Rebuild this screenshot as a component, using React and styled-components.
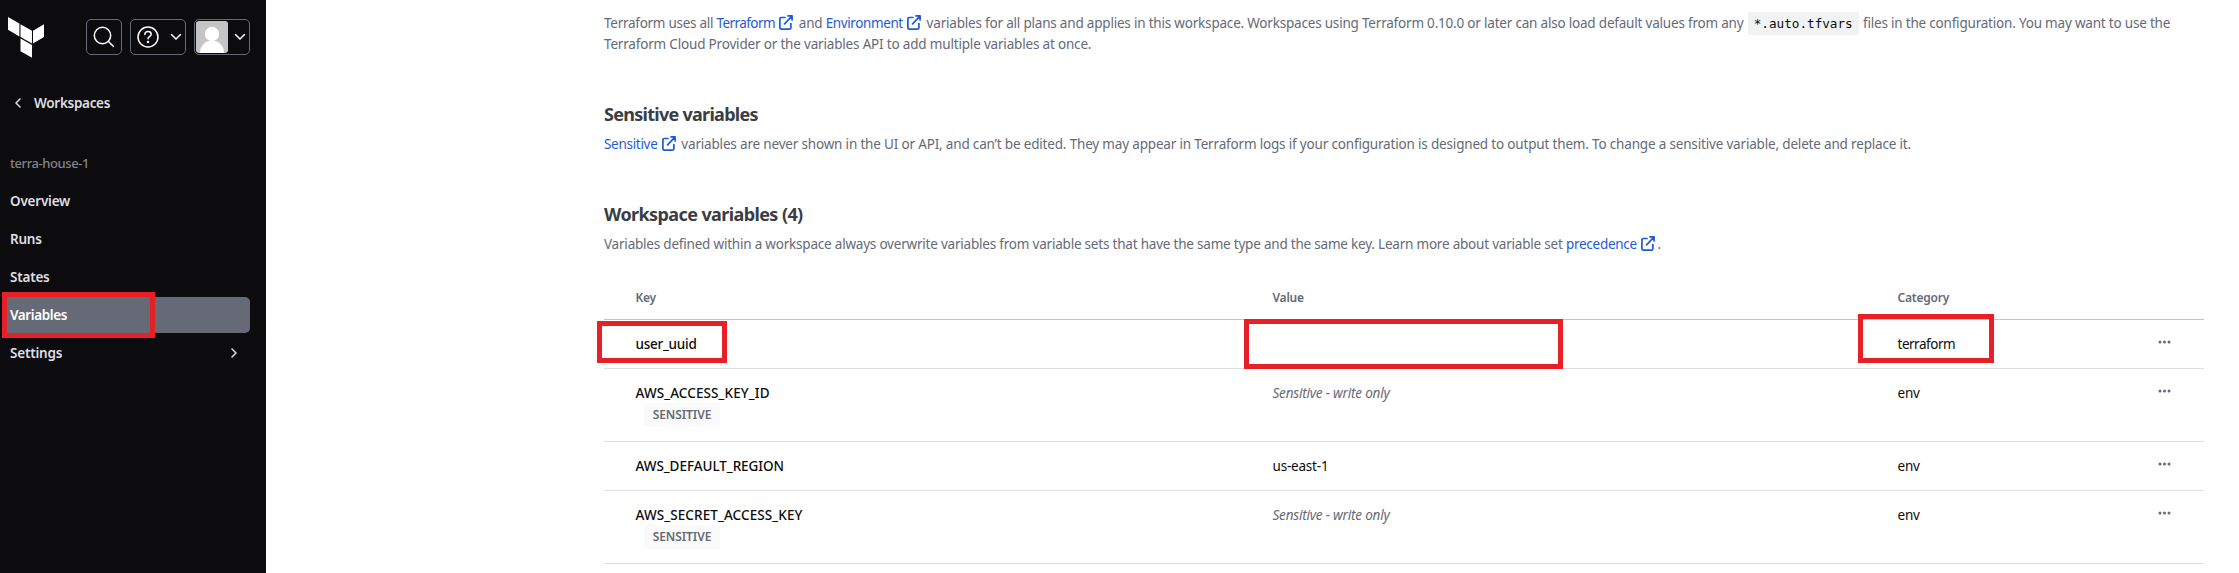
import React from 'react';
import styled, { createGlobalStyle } from 'styled-components';

const GlobalStyle = createGlobalStyle`
  * { box-sizing: border-box; }
  body {
    margin: 0;
    background: #fff;
    font-family: "Noto Sans", sans-serif;
    font-size: 13.5px;
    overflow: hidden;
  }
`;

const Page = styled.div`
  display: flex;
  height: 573px;
`;

/* ---------- Sidebar ---------- */

const Sidebar = styled.aside`
  flex: none;
  width: 266px;
  background: #0c0c0e;
  color: #dedfe3;
  font-weight: 600;
  line-height: 20px;
`;

const SidebarHeader = styled.header`
  display: flex;
  align-items: flex-start;
  height: 55px;
  padding: 19px 16px 0 8px;
  gap: 8px;
`;

const Logo = styled.svg`
  display: block;
  width: 36px;
  height: 41px;
  margin: -2px 34px 0 0;
  fill: #fff;
`;

const HeaderButton = styled.button`
  display: flex;
  align-items: center;
  justify-content: ${(p) => (p.$split ? 'space-between' : 'center')};
  width: ${(p) => (p.$split ? 56 : 36)}px;
  height: 36px;
  padding: ${(p) => p.$pad || '0'};
  border: 1px solid #656a76;
  border-radius: 5px;
  background: transparent;
  color: #fff;

  svg { display: block; }
`;

const Avatar = styled.svg`
  width: 32px;
  height: 32px;
  border-radius: 3px;
  background: #c4c4c4;
`;

const BackLink = styled.a`
  display: flex;
  align-items: center;
  gap: 13px;
  padding: 38px 0 0 15px;
  letter-spacing: -0.3px;

  svg { display: block; }
`;

const WorkspaceName = styled.div`
  padding: 40px 0 0 10px;
  color: #82858f;
  font-size: 13px;
  font-weight: 500;
  letter-spacing: -0.42px;
`;

const Nav = styled.nav`
  display: flex;
  flex-direction: column;
  gap: 2px;
  margin: 10px 16px 0 2px;
`;

const NavItem = styled.a`
  position: relative;
  display: flex;
  align-items: center;
  justify-content: space-between;
  height: 36px;
  padding: 0 13px 0 8px;
  border-radius: 5px;
  background: ${(p) => (p.$active ? '#656a76' : 'transparent')};
  color: ${(p) => (p.$active ? '#fff' : 'inherit')};
  letter-spacing: ${(p) => p.$track || '-0.22px'};
`;

/* ---------- Annotations ---------- */

const Highlight = styled.div`
  position: absolute;
  left: ${(p) => p.$x}px;
  top: ${(p) => p.$y}px;
  width: ${(p) => p.$w}px;
  height: ${(p) => p.$h}px;
  border: 5px solid #e71f27;
`;

/* ---------- Content ---------- */

const Main = styled.main`
  flex: none;
  width: 1600px;
  margin-left: 338px;
  padding-top: 13px;
`;

const Paragraph = styled.p`
  margin: 0;
  color: #656a76;
  line-height: 21px;
  white-space: nowrap;
  letter-spacing: ${(p) => p.$track || '-0.2px'};
`;

const Run = styled.span`
  letter-spacing: ${(p) => p.$track};
`;

const Link = styled.a`
  color: #1f5bd8;
  letter-spacing: ${(p) => p.$track};

  svg {
    margin: 0 2px 0 4.5px;
    vertical-align: -1.5px;
  }
`;

const Code = styled.code`
  padding: 4px 6px;
  margin: 0 1px;
  background: #f1f2f3;
  color: #0c0c0e;
  font: 12.65px/20px "DejaVu Sans Mono", monospace;
  letter-spacing: 0;
`;

const Heading = styled.h2`
  margin: 47px 0 8px;
  color: #3b3d45;
  font-size: 18px;
  font-weight: 700;
  line-height: 24px;
  letter-spacing: ${(p) => p.$track};
`;

const Table = styled.div`
  display: flex;
  flex-direction: column;
`;

const Row = styled.div`
  display: grid;
  grid-template-columns: 637px 625px 1fr 81px;
  height: ${(p) => (p.$tall ? 73 : 49)}px;
  padding-top: 14px;
  border-bottom: 1px solid #dedfe0;
  color: #0c0c0e;
  line-height: 20px;
`;

const HeadRow = styled(Row)`
  height: 65px;
  padding-top: 35px;
  border-bottom-color: #c2c5cb;
  color: #656a76;
  font-size: 12px;
  font-weight: 600;
  line-height: 16px;
  letter-spacing: -0.22px;
`;

const Cell = styled.div`
  position: relative;
  padding-left: 31.5px;
  letter-spacing: ${(p) => p.$track};
`;

const KeyCell = styled(Cell)`
  font-weight: 500;
`;

const WriteOnly = styled.em`
  color: #656a76;
`;

const Badge = styled.div`
  width: 76px;
  height: 24px;
  margin-left: 8.5px;
  border-radius: 3px;
  background: #fafafa;
  color: #656a76;
  font-size: 12px;
  font-weight: 600;
  line-height: 24px;
  text-align: center;
  letter-spacing: -0.1px;
`;

const MenuCell = styled.div`
  padding: 6px 0 0 35px;

  svg { display: block; }
`;

/* ---------- Icons ---------- */

const Chevron = ({ d, w, h }) => (
  <svg width={w} height={h} viewBox={`0 0 ${w} ${h}`} fill="none" stroke="currentColor" strokeWidth="1.5" strokeLinecap="round" strokeLinejoin="round">
    <path d={d} />
  </svg>
);

const ChevronDown = () => <Chevron w={12} h={8} d="M1.5 1.500 6 6l4.500-4.500" />;

const SearchIcon = () => (
  <svg width="22" height="22" viewBox="0 0 22 22" fill="none" stroke="currentColor" strokeWidth="1.5" strokeLinecap="round">
    <circle cx="9.5" cy="9.5" r="8.2" />
    <path d="m15.5 15.500 5 5" />
  </svg>
);

const HelpIcon = () => (
  <svg width="22" height="22" viewBox="0 0 22 22" fill="none" stroke="currentColor" strokeWidth="1.5" strokeLinecap="round" strokeLinejoin="round">
    <circle cx="11" cy="11" r="10" />
    <path d="M7.800 8.400c.2-1.800 1.500-2.900 3.200-2.900 1.900 0 3.200 1.100 3.200 2.700 0 2.400-3.200 2.400-3.200 4.600" />
    <circle cx="11" cy="16" r=".5" fill="currentColor" />
  </svg>
);

const ExternalIcon = () => (
  <svg width="14" height="15" viewBox="0 0 14 15" fill="none" stroke="currentColor" strokeWidth="1.7" strokeLinecap="round" strokeLinejoin="round">
    <path d="M6 2.500H2.200A1.300 1.300 0 0 0 .9 3.800v9A1.300 1.300 0 0 0 2.200 14.100h8.400a1.300 1.300 0 0 0 1.300-1.300V8.500" />
    <path d="M9 .9h4.100V5M13.100.9 5.600 8.800" />
  </svg>
);

const DotsIcon = () => (
  <svg width="13" height="4" viewBox="0 0 13 4" fill="#656a76">
    <circle cx="2" cy="2" r="1.500" />
    <circle cx="6.500" cy="2" r="1.500" />
    <circle cx="11" cy="2" r="1.500" />
  </svg>
);

/* ---------- Data ---------- */

const variables = [
  { key: 'user_uuid', track: '-0.25px', category: 'terraform', catTrack: '-0.48px', marked: true },
  { key: 'AWS_ACCESS_KEY_ID', track: '0.1px', category: 'env', sensitive: true },
  { key: 'AWS_DEFAULT_REGION', track: '-0.05px', value: 'us-east-1', category: 'env' },
  { key: 'AWS_SECRET_ACCESS_KEY', track: '0.1px', category: 'env', sensitive: true },
];

const VariableRow = ({ item }) => (
  <Row $tall={item.sensitive}>
    <KeyCell $track={item.track}>
      {item.key}
      {item.sensitive && <Badge>SENSITIVE</Badge>}
      {item.marked && <Highlight $x={-7} $y={-13} $w={130} $h={42} />}
    </KeyCell>
    <Cell $track="-0.2px">
      {item.sensitive ? <WriteOnly>Sensitive - write only</WriteOnly> : item.value}
      {item.marked && <Highlight $x={3} $y={-15} $w={319} $h={50} />}
    </Cell>
    <Cell $track={item.catTrack || '-0.2px'}>
      {item.category}
      {item.marked && <Highlight $x={-8} $y={-20} $w={136} $h={49} />}
    </Cell>
    <MenuCell><DotsIcon /></MenuCell>
  </Row>
);

export default function App() {
  return (
    <Page>
      <GlobalStyle />
      <Sidebar>
        <SidebarHeader>
          <Logo viewBox="0 0 36 41">
            <path d="M0 0 11.400 6.600v12.800L0 12.800zM12.500 7.200 24 13.800v12.800L12.500 20zM25 13.800l11-6.500V20l-11 6.500zM12.500 21.400 24 28v12.800l-11.500-6.600z" />
          </Logo>
          <HeaderButton><SearchIcon /></HeaderButton>
          <HeaderButton $split $pad="0 3px 0 6px"><HelpIcon /><ChevronDown /></HeaderButton>
          <HeaderButton $split $pad="0 3px 0 1px">
            <Avatar viewBox="0 0 32 32" fill="#fff">
              <circle cx="16" cy="13" r="7.200" />
              <path d="M4 32c0-7 5-12.500 12-12.500S28 25 28 32z" />
            </Avatar>
            <ChevronDown />
          </HeaderButton>
        </SidebarHeader>
        <BackLink><Chevron w={6} h={10} d="M5 1 1 5l4 4" />Workspaces</BackLink>
        <WorkspaceName>terra-house-1</WorkspaceName>
        <Nav>
          <NavItem>Overview</NavItem>
          <NavItem>Runs</NavItem>
          <NavItem>States</NavItem>
          <NavItem $active $track="-0.4px">
            Variables
            <Highlight $x={0} $y={-5} $w={153} $h={46} />
          </NavItem>
          <NavItem>Settings<Chevron w={6} h={10} d="M1 1l4 4-4 4" /></NavItem>
        </Nav>
      </Sidebar>
      <Main>
        <Paragraph>
          <Run $track="-0.27px">Terraform uses all </Run>
          <Link $track="-0.57px">Terraform<ExternalIcon /></Link>{' '}
          <Run>and </Run>
          <Link $track="-0.4px">Environment<ExternalIcon /></Link>{' '}
          variables for all plans and applies in this workspace. Workspaces using Terraform 0.10.0 or later can also load default values from any{' '}
          <Code>*.auto.tfvars</Code>{' '}
          files in the configuration. You may want to use the
          <br />
          <Run $track="-0.18px">Terraform Cloud Provider or the variables API to add multiple variables at once.</Run>
        </Paragraph>
        <Heading $track="-0.72px">Sensitive variables</Heading>
        <Paragraph $track="-0.175px">
          <Link $track="-0.3px">Sensitive<ExternalIcon /></Link>{' '}
          variables are never shown in the UI or API, and can’t be edited. They may appear in Terraform logs if your configuration is designed to output them. To change a sensitive variable, delete and replace it.
        </Paragraph>
        <Heading $track="-0.6px">Workspace variables (4)</Heading>
        <Paragraph $track="-0.208px">
          Variables defined within a workspace always overwrite variables from variable sets that have the same type and the same key. Learn more about variable set{' '}
          <Link $track="-0.27px">precedence<ExternalIcon /></Link>.
        </Paragraph>
        <Table>
          <HeadRow>
            <Cell>Key</Cell>
            <Cell>Value</Cell>
            <Cell>Category</Cell>
          </HeadRow>
          {variables.map((item) => <VariableRow key={item.key} item={item} />)}
        </Table>
      </Main>
    </Page>
  );
}
